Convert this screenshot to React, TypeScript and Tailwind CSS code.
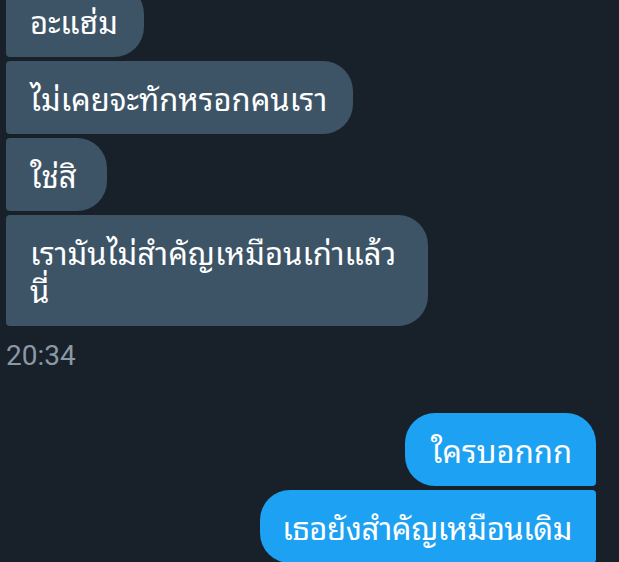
import React from "react";

const thai = { fontFamily: '"Noto Sans Thai Looped", "Noto Sans Thai", Roboto, sans-serif' };

function In({ text, className = "" }: { text: React.ReactNode; className?: string }) {
  return (
    <div
      className={`self-start whitespace-nowrap bg-[#3d5466] text-white text-[31px] leading-[38px] pl-[24px] pr-[26px] pt-[17px] pb-[18px] rounded-l-[4px] rounded-r-[30px] ${className}`}
    >
      {text}
    </div>
  );
}

export default function App() {
  return (
    <div className="w-[619px] h-[562px] overflow-hidden bg-[#18202a]" style={thai}>
      <div className="flex flex-col gap-[4px] pl-[6px] pr-[23px] -mt-[16px]">
        <In text="อะแฮ่ม" className="pr-[22px]" />
        <In text="ไม่เคยจะทักหรอกคนเรา" />
        <In text="ใช่สิ" className="pr-[30px]" />
        <In text={<>เรามันไม่สำคัญเหมือนเก่าแล้ว<br />นี่</>} className="w-[422px]" />
        <div
          className="mt-[10px] text-[28px] leading-[32px] text-[#8b98a5]"
          style={{ fontFamily: "Roboto, sans-serif" }}
        >
          20:34
        </div>
        <div className="self-end mt-[37px] whitespace-nowrap bg-[#1da1f2] text-white text-[31px] leading-[38px] pl-[26px] pr-[24px] pt-[17px] pb-[18px] rounded-l-[30px] rounded-tr-[30px] rounded-br-[4px]">
          ใครบอกกก
        </div>
        <div className="self-end whitespace-nowrap bg-[#1da1f2] text-white text-[31px] leading-[38px] tracking-[-0.4px] pl-[22px] pr-[24px] pt-[17px] pb-[18px] rounded-l-[30px] rounded-r-[4px]">
          เธอยังสำคัญเหมือนเดิม
        </div>
      </div>
    </div>
  );
}
